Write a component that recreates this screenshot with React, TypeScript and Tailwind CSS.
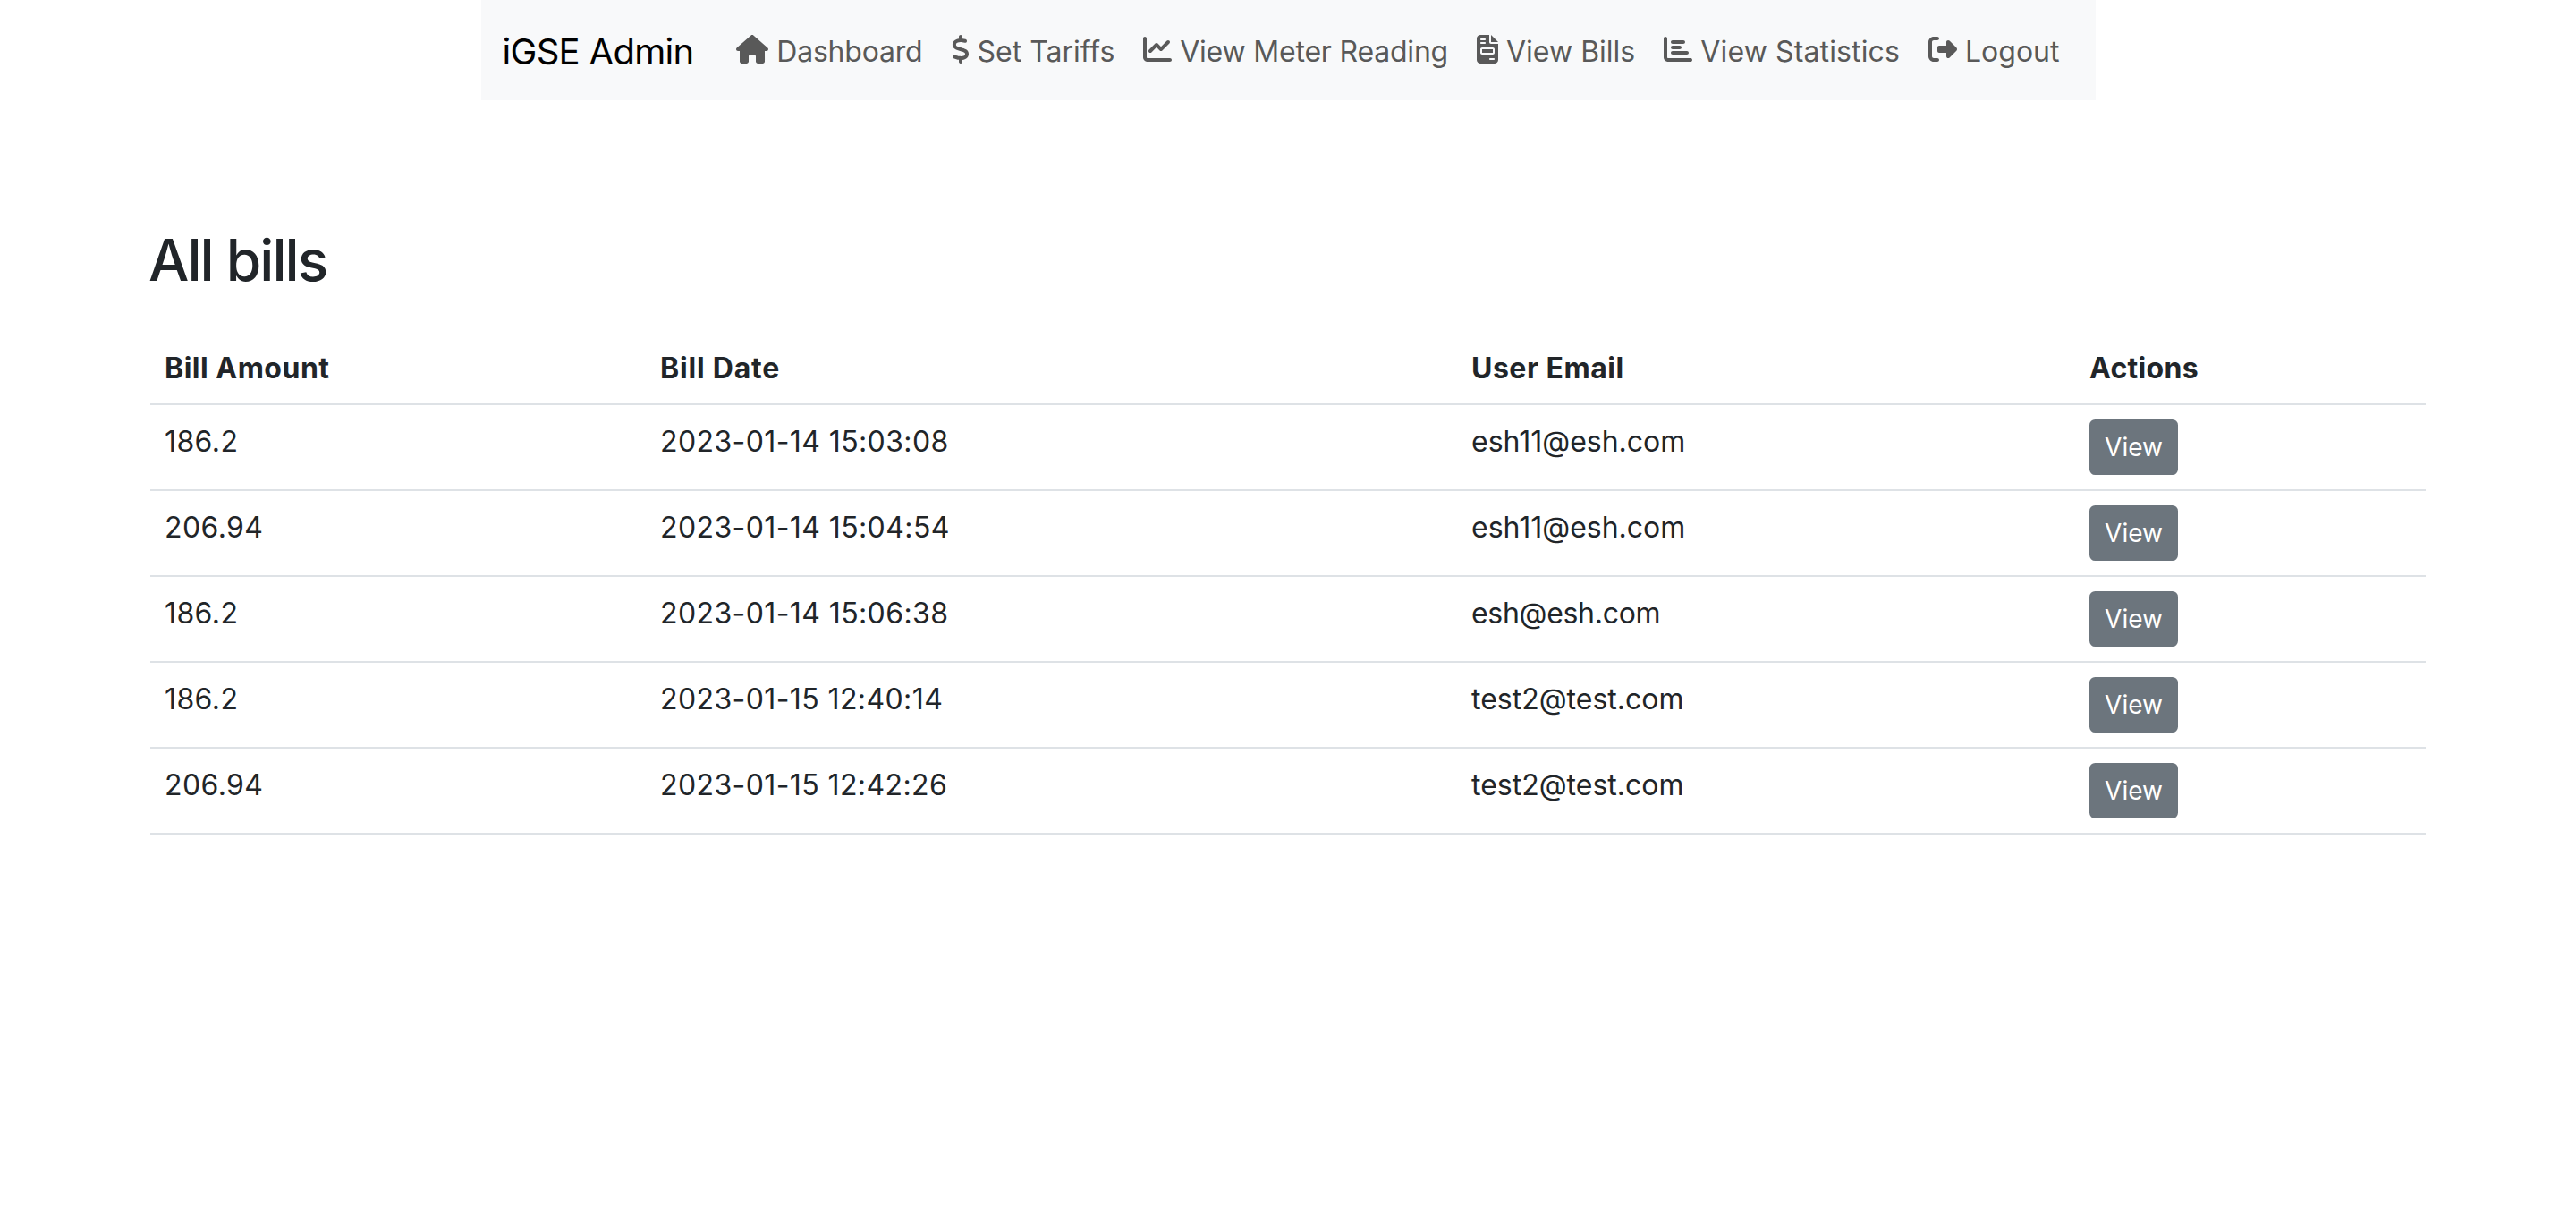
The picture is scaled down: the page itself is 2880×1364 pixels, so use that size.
import { FaHouse, FaDollarSign, FaChartLine, FaFileInvoice, FaChartBar, FaRightFromBracket } from "react-icons/fa6";

const links = [
  { label: "Dashboard", tracking: "tracking-[-0.2px]", icon: <FaHouse className="inline w-[36px] h-8 align-[-0.125em]" /> },
  { label: "Set Tariffs", tracking: "", icon: <FaDollarSign className="inline w-5 h-8 align-[-0.125em]" /> },
  { label: "View Meter Reading", tracking: "tracking-[-0.2px]", icon: <FaChartLine className="inline w-8 h-8 align-[-0.125em]" /> },
  { label: "View Bills", tracking: "", icon: <FaFileInvoice className="inline w-6 h-8 align-[-0.125em]" /> },
  { label: "View Statistics", tracking: "tracking-[0.13px]", icon: <FaChartBar className="inline w-8 h-8 align-[-0.125em]" /> },
  { label: "Logout", tracking: "", icon: <FaRightFromBracket className="inline w-8 h-8 align-[-0.125em]" /> },
];

const bills = [
  { amount: "186.2", date: "2023-01-14 15:03:08", email: "esh11@esh.com", emailTracking: "" },
  { amount: "206.94", date: "2023-01-14 15:04:54", email: "esh11@esh.com", emailTracking: "" },
  { amount: "186.2", date: "2023-01-14 15:06:38", email: "esh@esh.com", emailTracking: "tracking-[-0.3px]" },
  { amount: "186.2", date: "2023-01-15 12:40:14", email: "test2@test.com", emailTracking: "" },
  { amount: "206.94", date: "2023-01-15 12:42:26", email: "test2@test.com", emailTracking: "" },
];

export default function App() {
  return (
    <div className="min-h-[1364px] bg-white font-['Inter',sans-serif] text-[32px] leading-[48px] text-[#212529]">
      <div className="flex justify-center">
        <nav className="flex items-center bg-[#f8f9fa] px-6 py-4">
          <a href="#" className="mr-8 pt-[12px] pb-[8px] text-[40px] leading-[60px] tracking-[-0.7px] text-black">iGSE Admin</a>
          <ul className="flex">
            {links.map((l) => (
              <li key={l.label}>
                <a href="#" className={`block px-4 pt-[18px] pb-[14px] whitespace-nowrap text-[#595959] ${l.tracking}`}>
                  <span className="relative top-[-2px]">{l.icon}</span> {l.label}
                </a>
              </li>
            ))}
          </ul>
        </nav>
      </div>

      <div className="mx-[168px] mt-[140px]">
        <h2 className="mb-[42px] -ml-[2px] text-[64px] leading-[77px] font-medium tracking-[-2px]">All bills</h2>
        <table className="w-full table-fixed border-collapse">
          <colgroup>
            <col className="w-[554px]" />
            <col className="w-[907px]" />
            <col className="w-[691px]" />
            <col />
          </colgroup>
          <thead>
            <tr className="border-b-2 border-[#dee2e6] text-left">
              <th className="px-4 pt-[17px] pb-[15px] font-bold tracking-[0.5px]">Bill Amount</th>
              <th className="px-4 pt-[17px] pb-[15px] font-bold tracking-[0.8px]">Bill Date</th>
              <th className="px-4 pt-[17px] pb-[15px] font-bold tracking-[0.5px]">User Email</th>
              <th className="px-4 pt-[17px] pb-[15px] font-bold tracking-[0.3px]">Actions</th>
            </tr>
          </thead>
          <tbody>
            {bills.map((b) => (
              <tr key={b.date} className="border-b-2 border-[#dee2e6]">
                <td className="px-4 pt-[17px] pb-[15px] align-top tracking-[0.4px]">{b.amount}</td>
                <td className="px-4 pt-[17px] pb-[15px] align-top tracking-[0.4px]">{b.date}</td>
                <td className={`px-4 pt-[17px] pb-[15px] align-top ${b.emailTracking}`}>{b.email}</td>
                <td className="p-4 align-top">
                  <button className="block w-[99px] rounded-[6.4px] border-2 border-[#6c757d] bg-[#6c757d] py-2 text-center text-[28px] leading-[42px] text-white">
                    View
                  </button>
                </td>
              </tr>
            ))}
          </tbody>
        </table>
      </div>
    </div>
  );
}
